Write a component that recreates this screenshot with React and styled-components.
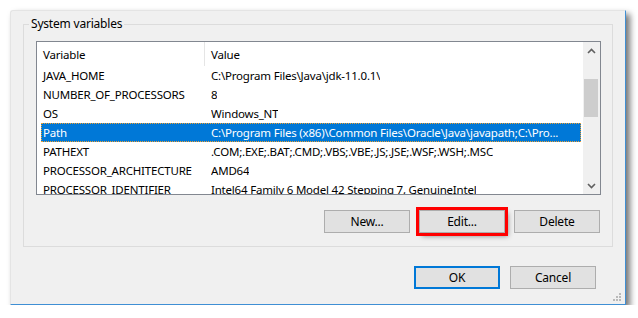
import styled, { createGlobalStyle } from 'styled-components';

const GlobalStyle = createGlobalStyle`
  body {
    margin: 0;
    background: #ffffff;
    font-family: "Noto Sans", "Open Sans", sans-serif;
    font-size: 11.5px;
    letter-spacing: -0.2px;
    color: #000000;
  }
`;

const variables = [
  { name: 'JAVA_HOME', value: 'C:\\Program Files\\Java\\jdk-11.0.1\\' },
  { name: 'NUMBER_OF_PROCESSORS', value: '8' },
  { name: 'OS', value: 'Windows_NT' },
  { name: 'Path', value: 'C:\\Program Files (x86)\\Common Files\\Oracle\\Java\\javapath;C:\\Pro...', selected: true },
  { name: 'PATHEXT', value: '.COM;.EXE;.BAT;.CMD;.VBS;.VBE;.JS;.JSE;.WSF;.WSH;.MSC' },
  { name: 'PROCESSOR_ARCHITECTURE', value: 'AMD64' },
  { name: 'PROCESSOR_IDENTIFIER', value: 'Intel64 Family 6 Model 42 Stepping 7, GenuineIntel' },
];

export default function App() {
  return (
    <>
      <GlobalStyle />
      <Window>
        <GroupBox>
          <Legend>System variables</Legend>
          <ListBox>
            <ListBody>
              <Header>
                <HeaderCell>Variable</HeaderCell>
                <HeaderCell last>Value</HeaderCell>
              </Header>
              {variables.map((v) => (
                <Row key={v.name} selected={v.selected}>
                  <NameCell>{v.name}</NameCell>
                  <ValueCell>{v.value}</ValueCell>
                </Row>
              ))}
            </ListBody>
            <ScrollBar>
              <Arrow>
                <svg width="9" height="6" viewBox="0 0 9 6">
                  <path d="M1 5 L4.5 1.5 L8 5" fill="none" stroke="#606060" strokeWidth="1.6" />
                </svg>
              </Arrow>
              <Track>
                <Thumb />
              </Track>
              <Arrow>
                <svg width="9" height="6" viewBox="0 0 9 6">
                  <path d="M1 1 L4.5 4.5 L8 1" fill="none" stroke="#606060" strokeWidth="1.6" />
                </svg>
              </Arrow>
            </ScrollBar>
          </ListBox>
          <ButtonRow>
            <Button>New...</Button>
            <Button marked>Edit...</Button>
            <Button>Delete</Button>
          </ButtonRow>
        </GroupBox>
        <DialogButtons>
          <Button primary>OK</Button>
          <Button>Cancel</Button>
        </DialogButtons>
        <Grip>
          <svg width="10" height="10" viewBox="0 0 10 10" fill="#b9b9b9">
            <rect x="7" y="1" width="2" height="2" />
            <rect x="4" y="4" width="2" height="2" />
            <rect x="7" y="4" width="2" height="2" />
            <rect x="1" y="7" width="2" height="2" />
            <rect x="4" y="7" width="2" height="2" />
            <rect x="7" y="7" width="2" height="2" />
          </svg>
        </Grip>
      </Window>
    </>
  );
}

const Window = styled.div`
  position: relative;
  box-sizing: border-box;
  margin: 10px 0 0 10px;
  width: 616px;
  height: 295px;
  padding: 5px 12px 0 12px;
  background: #f0f0f0;
  border-right: 1px solid #3f8fd4;
  border-bottom: 1px solid #3f8fd4;
  border-top: 1px solid #e4e4e4;
  border-left: 1px solid #e4e4e4;
  border-radius: 3px 0 0 0;
  box-shadow: 4px 4px 6px rgba(0, 0, 0, 0.55);
`;

const GroupBox = styled.fieldset`
  margin: 0;
  padding: 9px 11px 13px 12px;
  border: 1px solid #dcdcdc;
  min-width: 0;
`;

const Legend = styled.legend`
  margin-left: -7px;
  padding: 0 2px;
  line-height: 16px;
  font-size: 12px;
`;

const ListBox = styled.div`
  display: flex;
  height: 154px;
  box-sizing: border-box;
  border: 1px solid #828790;
  background: #ffffff;
  overflow: hidden;
`;

const ListBody = styled.div`
  flex: 1;
  overflow: hidden;
`;

const Header = styled.div`
  display: flex;
  height: 24px;
  align-items: center;
`;

const HeaderCell = styled.div`
  box-sizing: border-box;
  height: 100%;
  display: flex;
  align-items: center;
  padding-left: 6px;
  width: ${(p) => (p.last ? 'auto' : '168px')};
  border-right: ${(p) => (p.last ? 'none' : '1px solid #e5e5e5')};
`;

const Row = styled.div`
  display: flex;
  align-items: center;
  box-sizing: border-box;
  height: 19px;
  margin: 0 2px 0 4px;
  white-space: nowrap;
  ${(p) =>
    p.selected
      ? 'background: #0078d7; color: #ffffff; border: 1px dotted #f0a030;'
      : 'border: 1px solid transparent;'}
`;

const NameCell = styled.div`
  width: 168px;
  padding-left: 1px;
  flex-shrink: 0;
`;

const ValueCell = styled.div`
  overflow: hidden;
`;

const ScrollBar = styled.div`
  width: 17px;
  display: flex;
  flex-direction: column;
  background: #f0f0f0;
`;

const Arrow = styled.div`
  height: 17px;
  display: flex;
  align-items: center;
  justify-content: center;
`;

const Track = styled.div`
  flex: 1;
  padding: 20px 2px 0 1px;
`;

const Thumb = styled.div`
  height: 38px;
  background: #cdcdcd;
`;

const ButtonRow = styled.div`
  display: flex;
  justify-content: flex-end;
  gap: 9px;
  margin-top: 15px;
  padding-right: 1px;
`;

const Button = styled.button`
  box-sizing: border-box;
  width: 86px;
  height: 23px;
  padding: 0;
  font-family: inherit;
  font-size: 12px;
  letter-spacing: inherit;
  color: #000000;
  background: #e1e1e1;
  border: ${(p) => (p.primary ? '2px solid #0078d7' : '1px solid #adadad')};
  ${(p) =>
    p.marked &&
    'outline: 3px solid #ff0000; outline-offset: 0; box-shadow: 3px 3px 5px rgba(0,0,0,0.45);'}
`;

const DialogButtons = styled.div`
  display: flex;
  justify-content: flex-end;
  gap: 10px;
  margin-top: 19px;
  padding-right: 17px;
`;

const Grip = styled.div`
  position: absolute;
  right: 3px;
  bottom: 2px;
  line-height: 0;
`;
